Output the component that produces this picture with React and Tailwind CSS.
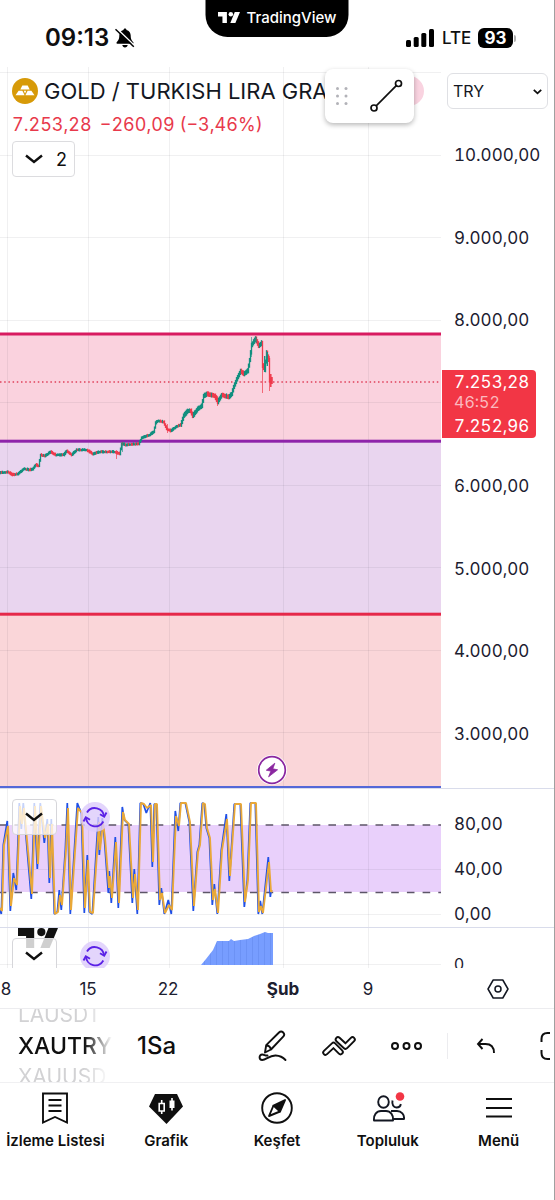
import { useId } from "react";

const GRID_X = [7, 88, 169, 283, 368];
const PRICE_GRID_Y = [72, 155, 237, 320, 402, 485, 567, 650, 732];

const PRICE_PATH = [
  [0, 473], [8, 472], [13, 475], [18, 474], [24, 469], [30, 470], [33, 469], [36, 465], [39, 466],
  [41, 455], [45, 456], [51, 452], [56, 455], [64, 455], [67, 451], [72, 455], [77, 450], [83, 450],
  [87, 450], [93, 454], [100, 452], [115, 452], [120, 454], [122, 444], [126, 445], [139, 444],
  [142, 438], [150, 435], [154, 432], [156, 423], [158, 421], [164, 422], [167, 429], [171, 431],
  [176, 427], [181, 425], [184, 416], [188, 411], [191, 411], [193, 416], [198, 409], [202, 406],
  [204, 396], [207, 394], [215, 396], [218, 402], [222, 395], [229, 397], [232, 394], [234, 387],
  [238, 377], [241, 371], [244, 374], [248, 371], [250, 360], [252, 345], [256, 339], [259, 346],
  [262, 343], [263, 366], [265, 370], [267, 353], [269, 360], [270, 380], [272, 382],
];

const OSC_PATH = [
  [0, 908], [2, 911], [4, 845], [8, 826], [11, 906], [14, 878], [17, 885], [20, 806], [22, 824],
  [24, 808], [27, 840], [32, 894], [35, 806], [38, 864], [41, 806], [45, 838], [48, 824], [50, 878],
  [52, 824], [55, 914], [58, 912], [60, 895], [62, 905], [66, 850], [68, 808], [71, 910], [78, 808],
  [82, 813], [85, 908], [88, 860], [90, 912], [93, 913], [99, 822], [100, 850], [103, 823],
  [105, 838], [109, 888], [110, 876], [112, 898], [116, 842], [119, 903], [123, 812], [125, 820],
  [129, 824], [133, 898], [135, 874], [138, 910], [141, 803], [144, 804], [147, 808], [151, 805],
  [153, 862], [155, 804], [157, 804], [160, 900], [162, 893], [165, 913], [169, 905], [172, 910],
  [176, 816], [179, 826], [181, 803], [186, 803], [190, 822], [194, 906], [198, 852], [200, 845],
  [203, 803], [205, 804], [207, 828], [210, 838], [213, 900], [215, 889], [218, 913], [222, 850],
  [227, 819], [230, 876], [235, 804], [241, 804], [245, 902], [248, 880], [251, 803], [256, 803],
  [259, 912], [261, 906], [263, 913], [269, 862], [271, 892], [272, 890],
];

const VOLUME_POINTS =
  "201,965 206,959 213,950 217,941 229,941 231,939 234,941 240,940 248,939 254,936 260,934 265,932 268,933 273,933 273,965";

function noise(i) {
  const v = Math.sin(i * 12.9898) * 43758.5453;
  return v - Math.floor(v) - 0.5;
}

function buildCandles(path) {
  const out = [];
  let i = 0;
  for (let s = 1; s < path.length; s++) {
    const [x0, y0] = path[s - 1];
    const [x1, y1] = path[s];
    for (let x = x0; x < x1; x++) {
      const a = y0 + ((y1 - y0) * (x - x0)) / (x1 - x0);
      const b = y0 + ((y1 - y0) * (x + 1 - x0)) / (x1 - x0);
      const n = noise(i++) * 2;
      const spread = x > 180 ? 1.9 : 1;
      out.push({
        x: x + 0.5,
        top: Math.min(a, b) - spread - Math.abs(n),
        bottom: Math.max(a, b) + spread + Math.abs(noise(i + 90)),
        up: b - a + n * 0.5 < 0,
      });
    }
  }
  return out;
}

const CANDLES = buildCandles(PRICE_PATH);
const toPoints = (path) => path.map((p) => p.join(",")).join(" ");
const SIGNAL = toPoints(
  OSC_PATH.map(([x, y], i) => {
    const prev = OSC_PATH[i - 1];
    const next = OSC_PATH[i + 1];
    let d = 0;
    if (prev && next) {
      if (y > prev[1] && y > next[1]) d = 5;
      if (y < prev[1] && y < next[1]) d = -5;
    }
    return [x - 0.7, Math.max(803, Math.min(914, y + d))];
  })
);

function Grid({ rows, top, bottom }) {
  return (
    <g stroke="#2a2e39" strokeOpacity="0.07" strokeWidth="1">
      {GRID_X.map((x) => (
        <line key={x} x1={x + 0.5} x2={x + 0.5} y1={top} y2={bottom} />
      ))}
      {rows.map((y) => (
        <line key={y} x1="0" x2="441" y1={y + 0.5} y2={y + 0.5} />
      ))}
    </g>
  );
}

function Chevron({ className }) {
  return (
    <svg viewBox="0 0 18 10" className={className} fill="none" stroke="#0f0f0f" strokeWidth="2.4" aria-hidden="true">
      <path d="M1 1.5l8 6.5 8-6.5" />
    </svg>
  );
}

function TvMark({ className }) {
  return (
    <svg viewBox="0 0 42 21" className={className} fill="currentColor" aria-hidden="true">
      <path d="M0 0h17v21H8.500V8.500H0z" />
      <circle cx="24.500" cy="4.300" r="4.300" />
      <path d="M32 0h10l-8.800 21H23.500z" />
    </svg>
  );
}

function RefreshBadge({ className }) {
  return (
    <button type="button" aria-label="Yenile" className={className}>
      <svg viewBox="0 0 30 30" className="size-[30px]" fill="none" stroke="#5b21e6" strokeWidth="1.900" aria-hidden="true">
        <circle cx="15" cy="15" r="15" fill="#dccafb" fillOpacity="0.800" stroke="none" />
        <path d="M7 10.500A9.200 9.200 0 0 1 24 14.500M23.300 19.500A9.200 9.200 0 0 1 6 15.500" />
        <path d="M20 12.200l4.200 2.500 2.300-4.200M10 17.800l-4.200-2.500L3.500 19.500" />
      </svg>
    </button>
  );
}

function StatusBar() {
  return (
    <header className="relative flex h-[67px] items-start justify-between pr-[38px] pl-[45px]">
      <div className="flex items-center gap-[6px] pt-[22px]">
        <span className="text-[24px] leading-8 font-semibold">09:13</span>
        <svg viewBox="0 0 20 20" className="size-5" fill="#000" aria-label="Sessiz">
          <path d="M10 0.500c.9 0 1.400.6 1.500 1.400 2.700.7 4.200 2.900 4.200 5.600 0 4.200 1.300 5.200 2.600 6.700.5.600.3 1.500-.6 1.500H2.300c-.9 0-1.100-.9-.6-1.500C3 12.700 4.300 11.700 4.300 7.500c0-2.700 1.500-4.900 4.200-5.600.1-.8.600-1.400 1.500-1.400zM7.300 17h5.400c-.2 1.600-1.300 2.500-2.700 2.500S7.500 18.600 7.300 17z" />
          <path d="M1.800 0.500L20 18" stroke="#fff" strokeWidth="1.500" />
          <path d="M0.500 1.200L18.800 18.800" stroke="#000" strokeWidth="1.500" />
        </svg>
      </div>
      <div className="absolute top-0 left-1/2 flex h-[37px] w-[143px] -translate-x-1/2 items-center justify-center gap-[6px] rounded-b-[22px] bg-black pb-[2px] text-white">
        <TvMark className="h-[11px] w-[23px]" />
        <span className="text-[15px] leading-5 font-medium">TradingView</span>
      </div>
      <div className="flex items-center gap-2 pt-[22px]">
        <svg viewBox="0 0 28 18" className="h-[18px] w-7" fill="#000" aria-label="Sinyal">
          <rect x="0" y="11" width="5" height="7" rx="1.500" />
          <rect x="7.700" y="8" width="5" height="10" rx="1.500" />
          <rect x="15.300" y="4" width="5" height="14" rx="1.500" />
          <rect x="23" y="0" width="5" height="18" rx="1.500" />
        </svg>
        <span className="w-7 text-[17px] leading-8 font-medium whitespace-nowrap">LTE</span>
        <span className="flex items-center gap-px">
          <span className="flex h-5 w-[35px] items-center justify-center rounded-md bg-black text-[17px] leading-5 font-bold text-white">
            93
          </span>
          <span className="h-[7px] w-[2px] rounded-r-full bg-[#b0b0b0]" />
        </span>
      </div>
    </header>
  );
}

function PricePane() {
  return (
    <section className="flex h-[721px]">
      <div className="relative min-w-0 flex-1">
        <svg viewBox="0 67 441 721" preserveAspectRatio="none" className="block h-full w-full" aria-label="Fiyat grafiği">
          <rect x="0" y="334" width="441" height="107" fill="#fad2de" />
          <rect x="0" y="441" width="441" height="173" fill="#e9d5ef" />
          <rect x="0" y="614" width="441" height="173" fill="#fad6d9" />
          <Grid rows={PRICE_GRID_Y} top={67} bottom={788} />
          <line x1="0" x2="441" y1="382" y2="382" stroke="#e0405a" strokeWidth="1.300" strokeDasharray="1.500 2.700" />
          <rect x="0" y="332.500" width="441" height="3" fill="#d81b60" />
          <rect x="0" y="439.700" width="441" height="3" fill="#8e24aa" />
          <rect x="0" y="612.700" width="441" height="3" fill="#e5294a" />
          <rect x="0" y="786" width="441" height="2" fill="#5468d8" />
          {CANDLES.map((c) => (
            <line key={c.x} x1={c.x} x2={c.x} y1={c.top} y2={c.bottom} stroke={c.up ? "#12907f" : "#ef3a4c"} strokeWidth="1.300" />
          ))}
          <path d="M251.500 337v20M256.500 337v6M122.500 442v10" stroke="#12907f" strokeOpacity="0.600" />
          <path d="M262.500 345v48M269.500 356v35M116.500 450v9M167.500 424v9M217.500 396v10" stroke="#ef3a4c" strokeOpacity="0.700" />
          <path d="M264.700 356v16M267.300 352v14" stroke="#12907f" strokeWidth="1.300" />
          <path d="M270.800 374v13M272 377v7" stroke="#ef3a4c" strokeWidth="1.500" />
        </svg>

        <div className="absolute inset-x-0 top-[8px] pl-3">
          <div className="flex h-8 items-center gap-[6px]">
            <svg viewBox="0 0 26 26" className="size-[26px] shrink-0" aria-hidden="true">
              <circle cx="13" cy="13" r="13" fill="#d79a08" />
              <g fill="#fff">
                <path d="M10.300 7.500h5.400l2 4H8.300z" />
                <path d="M6.600 12.700h3.800l2.200 4.600H3.500z" />
                <path d="M15.600 12.700h3.800l3.100 4.600h-9.100z" />
                <path d="M11.700 12.700h2.600L13 15.400z" />
              </g>
            </svg>
            <h1 className="text-[22px] leading-8 whitespace-nowrap text-[#131722]">GOLD / TURKISH LIRA GRA</h1>
          </div>
          <p className="flex h-8 items-center gap-2 pt-[2px] text-[18px] whitespace-nowrap text-[#e8394b] tabular-nums">
            <span>7.253,28</span>
            <span>−260,09 (−3,46%)</span>
          </p>
          <button
            type="button"
            className="mt-[2px] flex h-9 w-[63px] items-center justify-between rounded border border-[#dcdcdf] bg-white pr-[7px] pl-3 text-[18px]"
          >
            <Chevron className="h-[10px] w-[18px]" />2
          </button>
        </div>

        <span className="absolute top-[9px] right-[17px] size-[30px] rounded-full bg-[#f9d3e0]" />
        <div className="absolute top-[2px] right-[27px] flex h-[54px] w-[89px] items-center justify-between rounded-lg bg-white pr-[11px] pl-[11px] shadow-[0_2px_5px_rgba(0,0,0,0.28)]">
          <svg viewBox="0 0 12 18" className="h-[18px] w-3" fill="#b2b2b8" aria-hidden="true">
            {[1.5, 9, 16.5].map((y) => (
              <g key={y}>
                <circle cx="1.500" cy={y} r="1.500" />
                <circle cx="10" cy={y} r="1.500" />
              </g>
            ))}
          </svg>
          <button type="button" aria-label="Trend çizgisi">
            <svg viewBox="0 0 34 34" className="size-[34px]" fill="none" stroke="#0f0f0f" strokeWidth="1.700" aria-hidden="true">
              <circle cx="5" cy="29" r="3" />
              <circle cx="29.500" cy="4.500" r="3" />
              <path d="M7.200 26.800L27.300 6.700" />
            </svg>
          </button>
        </div>

        <button type="button" aria-label="Haberler" className="absolute bottom-[3px] left-[257px]">
          <svg viewBox="0 0 30 30" className="block size-[30px]" aria-hidden="true">
            <circle cx="15" cy="15" r="15" fill="#fff" />
            <circle cx="15" cy="15" r="13.300" fill="none" stroke="#8a27a0" strokeWidth="1.700" />
            <path d="M17.800 8.200L9.300 15.200l4.600.9-2.300 5.700 9-7-4.800-1z" fill="#8a27a0" stroke="#8a27a0" strokeWidth="0.800" strokeLinejoin="round" />
          </svg>
        </button>
      </div>

      <div className="flex w-[113px] shrink-0 flex-col pb-[42px] text-[17px] leading-6 text-[#1c2030] tabular-nums">
        <div className="relative mt-[6px] mr-[6px] ml-[6px] h-9">
          <select
            aria-label="Para birimi"
            defaultValue="TRY"
            className="h-full w-full appearance-none rounded-md border border-[#dfe0e4] bg-white pl-[5px] text-[16px] text-[#131722]"
          >
            <option>TRY</option>
            <option>USD</option>
          </select>
          <svg viewBox="0 0 9 6" className="pointer-events-none absolute top-4 right-[6px] h-[6px] w-[9px]" fill="none" stroke="#0f0f0f" strokeWidth="1.800" aria-hidden="true">
            <path d="M0.800 0.800L4.500 4.300 8.200 0.800" />
          </svg>
        </div>
        <div className="mt-[34px] flex flex-1 flex-col justify-between pl-[13px]">
          <span className="h-6">10.000,00</span>
          <span className="h-6">9.000,00</span>
          <span className="h-6">8.000,00</span>
          <div className="relative h-6">
            <div className="absolute -top-[21px] -left-3 flex w-[94px] flex-col rounded-r bg-[#f23645] pl-3 leading-5 text-white">
              <span className="h-[22px] pt-[2px]">7.253,28</span>
              <span className="h-[22px] text-[16px] text-[#fbb9be]">46:52</span>
              <span className="h-6 pt-[2px]">7.252,96</span>
            </div>
          </div>
          <span className="h-6">6.000,00</span>
          <span className="h-6">5.000,00</span>
          <span className="h-6">4.000,00</span>
          <span className="h-6">3.000,00</span>
        </div>
      </div>
    </section>
  );
}

function OscillatorPane() {
  return (
    <section className="flex h-[139px] border-t border-[#d9dceb]">
      <div className="relative min-w-0 flex-1">
        <svg viewBox="0 789 441 138" preserveAspectRatio="none" className="block h-full w-full" aria-label="Osilatör">
          <rect x="0" y="825" width="441" height="67" fill="#e9d0fb" />
          <Grid rows={[869, 914]} top={789} bottom={927} />
          <g stroke="#5d5668" strokeWidth="1.500" strokeDasharray="7.600 8.100" strokeDashoffset="1.300">
            <line x1="0" x2="441" y1="825" y2="825" />
            <line x1="0" x2="441" y1="892.500" y2="892.500" />
          </g>
          <polyline points={SIGNAL} fill="none" stroke="#1f4fe6" strokeWidth="1.700" strokeLinejoin="bevel" />
          <polyline points={toPoints(OSC_PATH)} fill="none" stroke="#e9a838" strokeWidth="1.900" strokeLinejoin="bevel" />
        </svg>
        <button
          type="button"
          aria-label="Göstergeyi daralt"
          className="absolute top-[10px] left-3 flex h-9 w-[45px] items-center justify-center rounded border border-[#d6d6da] bg-white/75 pr-[2px]"
        >
          <Chevron className="h-[10px] w-[18px]" />
        </button>
        <RefreshBadge className="absolute top-[13px] left-20" />
      </div>
      <div className="flex w-[113px] shrink-0 flex-col gap-[21px] pt-[23px] pl-[13px] text-[17px] leading-6 text-[#1c2030] tabular-nums">
        <span>80,00</span>
        <span>40,00</span>
        <span>0,00</span>
      </div>
    </section>
  );
}

function VolumePane() {
  const id = useId();
  return (
    <section className="flex h-[41px] overflow-hidden border-t border-[#d9dceb]">
      <div className="relative min-w-0 flex-1">
        <svg viewBox="0 928 441 40" preserveAspectRatio="none" className="block h-full w-full" aria-label="Hacim">
          <defs>
            <pattern id={id} width="6" height="40" patternUnits="userSpaceOnUse">
              <rect width="6" height="40" fill="#779dff" />
              <rect width="1" height="40" fill="#6c92f5" />
            </pattern>
          </defs>
          <Grid rows={[964]} top={928} bottom={968} />
          <polygon points={VOLUME_POINTS} fill={`url(#${id})`} />
        </svg>
        <TvMark className="absolute top-0 left-[17px] h-5 w-[42px] text-[#111]" />
        <button
          type="button"
          aria-label="Hacmi daralt"
          className="absolute top-[10px] left-3 flex h-9 w-[45px] items-center justify-center rounded border border-[#d6d6da] bg-white/80 pr-[2px]"
        >
          <Chevron className="h-[10px] w-[18px]" />
        </button>
        <RefreshBadge className="absolute top-[13px] left-20" />
      </div>
      <div className="w-[113px] shrink-0 pt-6 pl-[13px] text-[16px] leading-6 text-[#1c2030]">0</div>
    </section>
  );
}

function TimeAxis() {
  return (
    <div className="flex h-10 items-center pt-[2px] text-[17px] text-[#1c2030]">
      <div className="flex min-w-0 flex-1 items-center text-center leading-6">
        <span className="w-3">8</span>
        <span className="ml-14 w-10">15</span>
        <span className="ml-10 w-10">22</span>
        <span className="ml-[75px] w-10 font-bold">Şub</span>
        <span className="ml-[45px] w-10">9</span>
      </div>
      <button type="button" aria-label="Grafik ayarları" className="flex w-[113px] shrink-0 justify-center">
        <svg viewBox="0 0 22 20" className="h-5 w-[22px]" fill="none" stroke="#131722" strokeWidth="1.500" aria-hidden="true">
          <path d="M6.200 1h9.600L21 10l-5.200 9H6.200L1 10z" strokeLinejoin="round" />
          <circle cx="11" cy="10" r="3" />
        </svg>
      </button>
    </div>
  );
}

function Toolbar() {
  return (
    <div className="flex h-[74px] items-center overflow-hidden border-t border-[#ececef]">
      <div className="flex h-[73px] w-[112px] shrink-0 flex-col justify-center overflow-hidden mask-r-from-75% mask-r-to-100% pl-[18px] leading-[30px] whitespace-nowrap">
        <span className="text-[21px] text-[#d2d2d4]">LAUSDT</span>
        <button type="button" className="text-left text-[23px] leading-8 font-medium">XAUTRY</button>
        <span className="text-[21px] text-[#d2d2d4]">XAUUSD</span>
      </div>
      <button type="button" className="ml-[25px] text-left text-[24px] leading-8 font-medium">1Sa</button>
      <div className="ml-auto flex shrink-0 items-center">
        <button type="button" aria-label="Çizim araçları">
          <svg viewBox="0 0 30 32" className="h-8 w-[30px]" fill="none" stroke="#0f0f0f" strokeWidth="1.900" strokeLinejoin="round" strokeLinecap="round" aria-hidden="true">
            <path d="M7 22.500l1.200-7.300L21 2.500a3 3 0 0 1 4.200 0 3 3 0 0 1 0 4.200L13 19.500zM8.200 15.200c2.300.3 4.300 2.200 4.800 4.300" />
            <path d="M9.500 25.500c-2.500.3-3-1-5.300-1-3.500 0-3.500 5.500 0 5.500 4 0 7-4.800 13.500-4.500 4.500.2 7.500 2 9.800 4.500" />
          </svg>
        </button>
        <button type="button" aria-label="Göstergeler" className="ml-[34px]">
          <svg viewBox="0 0 34 22" className="h-[22px] w-[34px]" fill="none" strokeLinejoin="round" strokeLinecap="round" aria-hidden="true">
            <path d="M3.500 17.500l8-7.500 7 7M16 4.500l7.500 7L30.500 4.500" stroke="#0f0f0f" strokeWidth="6.500" />
            <path d="M3.500 17.500l8-7.500 7 7M16 4.500l7.500 7L30.500 4.500" stroke="#fff" strokeWidth="2.700" />
          </svg>
        </button>
        <button type="button" aria-label="Diğer" className="ml-[35px]">
          <svg viewBox="0 0 32 10" className="h-[10px] w-8" fill="none" stroke="#0f0f0f" strokeWidth="2" aria-hidden="true">
            <circle cx="4" cy="5" r="3" />
            <circle cx="15.500" cy="5" r="3" />
            <circle cx="27" cy="5" r="3" />
          </svg>
        </button>
        <span className="ml-6 h-[26px] w-px bg-[#ececef]" />
        <button type="button" aria-label="Geri al" className="ml-7">
          <svg viewBox="0 0 20 16" className="h-4 w-5" fill="none" stroke="#0f0f0f" strokeWidth="1.900" aria-hidden="true">
            <path d="M6.500 1L2 6l4.500 5M2 6h7.500c5.500 0 8.500 3 8.500 9" />
          </svg>
        </button>
        <button type="button" aria-label="Tam ekran" className="mr-1 ml-[44px] w-[10px] overflow-hidden">
          <svg viewBox="0 0 10 30" className="h-[30px] w-[10px]" fill="none" stroke="#0f0f0f" strokeWidth="2" aria-hidden="true">
            <path d="M10 2H7.500Q1.500 2 1.500 8v3M1.500 19v3q0 6 6 6H10" />
          </svg>
        </button>
      </div>
    </div>
  );
}

const NAV = [
  {
    label: "İzleme Listesi",
    icon: (
      <svg viewBox="0 0 34 34" className="size-[34px]" fill="none" stroke="#0f0f0f" strokeWidth="1.900" aria-hidden="true">
        <path d="M5 2.500h24v29l-12-5.500-12 5.500zM10.500 9h13M10.500 14.500h13M10.500 20h13" />
      </svg>
    ),
  },
  {
    label: "Grafik",
    icon: (
      <svg viewBox="0 0 34 34" className="size-[34px]" aria-hidden="true">
        <path d="M6 3h22l6 12.500L17.500 33 0 15.500z" fill="#0f0f0f" />
        <path d="M10.200 12.500h5v7.500h-5zM12.700 9v3.500M12.700 20v3" fill="none" stroke="#fff" strokeWidth="1.600" />
        <path d="M20.500 9.500h5v7.500h-5z" fill="#fff" />
        <path d="M23 7v12.500" stroke="#fff" strokeWidth="1.600" />
      </svg>
    ),
  },
  {
    label: "Keşfet",
    icon: (
      <svg viewBox="0 0 34 34" className="size-[34px]" fill="none" stroke="#0f0f0f" strokeWidth="1.900" strokeLinejoin="round" aria-hidden="true">
        <circle cx="17" cy="17" r="14.800" />
        <path d="M13.500 14.500L25 9l-5 11.500z" fill="#0f0f0f" />
        <path d="M13.500 14.500L9 25l11-4.500" />
      </svg>
    ),
  },
  {
    label: "Topluluk",
    icon: (
      <svg viewBox="0 0 34 34" className="size-[34px]" fill="none" stroke="#131722" strokeWidth="1.900" aria-hidden="true">
        <ellipse cx="12.500" cy="11" rx="5.300" ry="5.700" />
        <path d="M21.500 9.500c-.8 4 1 7 4 7 2.500 0 4-1.500 4.300-3.500" />
        <path d="M3 29.500c-.5-5.500 2.500-9.500 7-9.500h5c4.500 0 7.500 4 7 9.500zM20 20h6c4.500 0 7.500 3.500 7 8H22" strokeLinejoin="round" />
        <circle cx="29" cy="5.500" r="4.300" fill="#f23645" stroke="none" />
      </svg>
    ),
  },
  {
    label: "Menü",
    icon: (
      <svg viewBox="0 0 34 34" className="size-[34px]" fill="none" stroke="#0f0f0f" strokeWidth="2" aria-hidden="true">
        <path d="M4 8h26M4 17h26M4 25.500h26" />
      </svg>
    ),
  },
];

function BottomNav() {
  return (
    <nav className="grid h-[118px] grid-cols-5 border-t border-[#f0f0f2]">
      {NAV.map((item) => (
        <a key={item.label} href="#" className="flex flex-col items-center gap-1 pt-2 text-[15px] leading-6 font-semibold whitespace-nowrap">
          {item.icon}
          <span>{item.label}</span>
        </a>
      ))}
    </nav>
  );
}

export default function App() {
  return (
    <div className="min-h-screen overflow-hidden border-r border-[#a0a0a0] bg-white font-['Inter','Liberation_Sans',sans-serif] text-[#0f0f0f]">
      <StatusBar />
      <main>
        <PricePane />
        <OscillatorPane />
        <VolumePane />
        <TimeAxis />
      </main>
      <Toolbar />
      <BottomNav />
    </div>
  );
}
